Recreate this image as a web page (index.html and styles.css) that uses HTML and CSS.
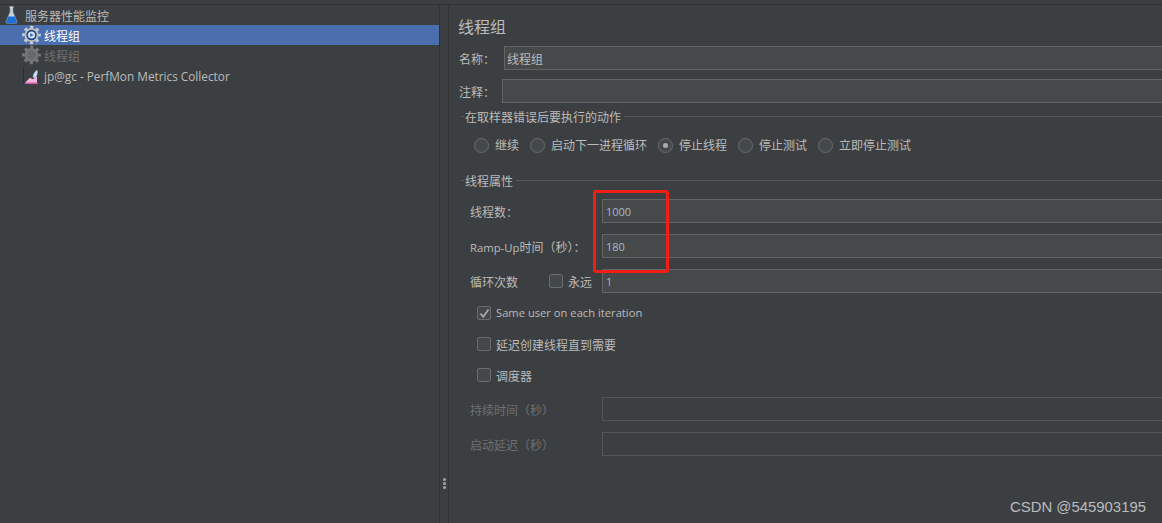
FILE: index.html
```html
<!DOCTYPE html>
<html lang="zh">
<head>
<meta charset="utf-8">
<title>线程组</title>
<link rel="stylesheet" href="styles.css">
</head>
<body>
<div class="app">
  <aside class="tree">
    <div class="node">
      <svg class="ico-flask" width="13" height="18" viewBox="0 0 13 18"><path d="M5 1h3v5l4 9.500c.3 1-.3 1.800-1.200 1.800H2.200C1.300 17.300.7 16.500 1 15.500L5 6z" fill="#c9d2dc" stroke="#8793a0" stroke-width=".6"/><path d="M3.300 10.500h6.400l2.200 5.200c.2.800-.3 1.500-1.100 1.500H2.200c-.8 0-1.300-.7-1.100-1.500z" fill="#1f6fd6"/><path d="M4.500 1h4" stroke="#e4e8ec" stroke-width="1"/></svg>
      <span class="node-text">服务器性能监控</span>
    </div>
    <div class="node node-sel">
      <svg class="ico-gear" width="20" height="20" viewBox="0 0 20 20"><circle cx="9.500" cy="10" r="7" fill="#bfc3c8"/><circle cx="9.500" cy="10" r="8" fill="none" stroke="#c9cdd2" stroke-width="2.600" stroke-dasharray="3.140 3.140" stroke-dashoffset="1.570"/><circle cx="9.500" cy="10" r="5.200" fill="#174482"/><circle cx="9.500" cy="10" r="3.600" fill="#d5e1ee"/><path d="M8.200 7.900l3.400 2.100-3.400 2.100z" fill="#2f6db8"/></svg>
      <span class="node-text node-text-sel">&#x7EBF;程组</span>
    </div>
    <div class="node">
      <svg class="ico-gear" width="20" height="20" viewBox="0 0 20 20"><circle cx="9.500" cy="10" r="7" fill="#737577"/><circle cx="9.500" cy="10" r="8" fill="none" stroke="#77797b" stroke-width="2.600" stroke-dasharray="3.140 3.140" stroke-dashoffset="1.570"/><circle cx="9.500" cy="10" r="4.400" fill="#66696b"/></svg>
      <span class="node-text node-text-off">线程组</span>
    </div>
    <div class="node">
      <svg class="ico-perf" width="20" height="20" viewBox="0 0 20 20"><path d="M1.500 2v16" stroke="#2a2d30" stroke-width="1"/><path d="M3 18.500h13" stroke="#d94fb0" stroke-width="1.200"/><path d="M3 17.800l5-5 3 1.500 4-3v6.500z" fill="#f3b6dc"/><path d="M11 12.500c0-3 1.500-6 4-7.500 1 2.500.2 6-2 8z" fill="#cfe2fa" stroke="#7fa8dc" stroke-width=".5"/></svg>
      <span class="node-text latin-tree">jp@gc - PerfMon Metrics Collector</span>
    </div>
  </aside>

  <div class="splitter"><span class="grip"><i></i><i></i><i></i></span></div>

  <main class="panel">
    <div class="panel-inner">
      <h1 class="title">线程组</h1>
      <div class="row row-name">
        <label class="lbl">名称&#xFF1A;</label>
        <div class="input">线程组</div>
      </div>
      <div class="row row-comment">
        <label class="lbl lbl-comment">注释&#xFF1A;</label>
        <div class="input"></div>
      </div>

      <section class="group group-err">
        <div class="legend"><span class="legend-text">在取样器错误后要执行的动作</span></div>
        <div class="radios">
          <span class="radio"></span><span class="opt">继续</span>
          <span class="radio"></span><span class="opt">启动下一进程循环</span>
          <span class="radio radio-on"></span><span class="opt">停止线程</span>
          <span class="radio"></span><span class="opt">停止测试</span>
          <span class="radio"></span><span class="opt">立即停止测试</span>
        </div>
      </section>

      <section class="group group-props">
        <div class="legend"><span class="legend-text">线程属性</span></div>
        <div class="field field-first">
          <label class="fl">线程数&#xFF1A;</label>
          <div class="input num">1000</div>
        </div>
        <div class="field">
          <label class="fl"><span class="latin-ramp">Ramp-Up</span>时间&#xFF08;秒&#xFF09;&#xFF1A;</label>
          <div class="input num">180</div>
        </div>
        <div class="field">
          <label class="fl fl-loop">循环次数</label>
          <span class="check check-forever"></span>
          <span class="opt-forever">永远</span>
          <div class="input num">1</div>
        </div>
        <div class="chk-row chk-row-first">
          <span class="check check-on"><svg width="11" height="11" viewBox="0 0 11 11"><path d="M1.500 5.500l2.800 3.300L9.500 1.500" fill="none" stroke="#a9abad" stroke-width="1.700"/></svg></span>
          <span class="latin-same">Same user on each iteration</span>
        </div>
        <div class="chk-row"><span class="check"></span><span class="chk-text">延迟创建线程直到需要</span></div>
        <div class="chk-row"><span class="check"></span><span class="chk-text">调度器</span></div>
        <div class="field field-off">
          <label class="fl fl-off">持续时间&#xFF08;秒&#xFF09;</label>
          <div class="input input-off"></div>
        </div>
        <div class="field">
          <label class="fl fl-off">启动延迟&#xFF08;秒&#xFF09;</label>
          <div class="input input-off"></div>
        </div>
      </section>
    </div>
  </main>
</div>
<div class="highlight"></div>
<div class="watermark">CSDN @545903195</div>
</body>
</html>
```
FILE: styles.css
```css
* { box-sizing: border-box; }
html, body { margin: 0; height: 100%; overflow: hidden; }
body {
  background: #3c3f41;
  color: #bbbbbb;
  font: 12px/16px "Open Sans", "Noto Sans CJK SC", sans-serif;
}
.app {
  display: flex;
  height: 523px;
  padding-top: 4px;
  position: relative;
}
.app::before {
  content: "";
  position: absolute;
  left: 0; right: 0; top: 4px;
  height: 1px;
  background: #323232;
}
.tree { width: 439px; padding-top: 1px; flex: none; }
.node { height: 20px; display: flex; align-items: center; }
.node-sel { background: #4b6eaf; }
.ico-flask { margin-left: 5px; margin-right: 7px; flex: none; }
.ico-gear { margin-left: 22px; margin-right: 2px; flex: none; }
.ico-perf { margin-left: 22px; margin-right: 2px; flex: none; }
.node-text { white-space: nowrap; padding-top: 4px; }
.node-text-sel { color: #ffffff; }
.node-text-off { color: #6e7072; }
.latin-tree { font-size: 11.800px; padding-top: 1px; }

.splitter {
  width: 10px;
  flex: none;
  border-left: 1px solid #323232;
  border-right: 1px solid #323232;
  display: flex;
  justify-content: center;
  padding-top: 474px;
}
.grip { display: flex; flex-direction: column; gap: 1px; }
.grip i { width: 3px; height: 3px; border-radius: 50%; background: #a5a7a9; display: block; }

.panel { flex: 1; overflow: hidden; min-width: 0; }
.panel-inner { width: 900px; padding: 11px 0 0 10px; }
.title { margin: 0 0 0 -1px; font-size: 16px; line-height: 24px; font-weight: 400; color: #bbbbbb; }

.row { display: flex; align-items: center; height: 24px; }
.row-name { margin-top: 7px; }
.row-comment { margin-top: 9px; }
.lbl { width: 45px; flex: none; padding-top: 4px; }
.lbl-comment { width: 43px; }

.input {
  flex: 1;
  height: 24px;
  background: #45494a;
  border: 1px solid #646464;
  padding-left: 2px;
  line-height: 26px;
  color: #bbbbbb;
}
.input.num { color: #a9b7c6; font-size: 11px; line-height: 24px; padding-left: 3px; }
.input-off { background: transparent; border-color: #555555; }

.group { margin-left: 2px; }
.group-err { margin-top: 7px; }
.group-props { margin-top: 19px; }
.legend { display: flex; align-items: center; height: 14px; line-height: 14px; white-space: nowrap; padding-left: 4px; position: relative; }
.legend::before { content: ""; position: absolute; left: 0; width: 3px; top: 6px; height: 1px; background: #555759; }
.legend::after { content: ""; flex: 1; height: 1px; background: #555759; margin: -2px 0 0 3px; }
.legend-text { padding-top: 2px; }

.radios { display: flex; align-items: center; height: 20px; margin-top: 11px; padding-left: 13px; white-space: nowrap; }
.radio {
  width: 15px; height: 15px; border-radius: 50%;
  border: 1px solid #6b6b6b; background: #43494a; margin-right: 6px; flex: none;
  display: flex; align-items: center; justify-content: center;
}
.radio-on::after { content: ""; width: 5px; height: 5px; border-radius: 50%; background: #a9abad; }
.opt { padding-top: 2px; margin-right: 11px; }

.field { display: flex; align-items: center; height: 24px; margin-top: 11px; padding-left: 9px; white-space: nowrap; }
.fl { width: 132px; flex: none; padding-top: 4px; }
.fl-loop { width: 79px; }
.fl-off { color: #6e7072; }
.latin-ramp { font-size: 11.300px; }
.check {
  width: 14px; height: 14px; flex: none;
  border: 1px solid #6b6b6b; border-radius: 2px; background: #43494a;
  display: flex; align-items: center; justify-content: center;
}
.check-forever { margin-right: 5px; }
.opt-forever { width: 34px; flex: none; padding-top: 4px; }
.chk-row { display: flex; align-items: center; gap: 5px; height: 20px; margin-top: 11px; padding-left: 16px; }
.chk-row-first { margin-top: 10px; }
.chk-text { padding-top: 4px; }
.latin-same { font-size: 11.200px; }
.field-off { margin-top: 12px; }

.highlight {
  position: absolute;
  left: 593px; top: 190px;
  width: 76px; height: 83px;
  border: 3px solid #f01e14;
  border-radius: 3px;
}
.watermark {
  position: absolute;
  left: 1010px; top: 498px;
  font: 14.900px/18px "Liberation Sans", sans-serif;
  color: #b9bbbd;
  white-space: nowrap;
}
```
